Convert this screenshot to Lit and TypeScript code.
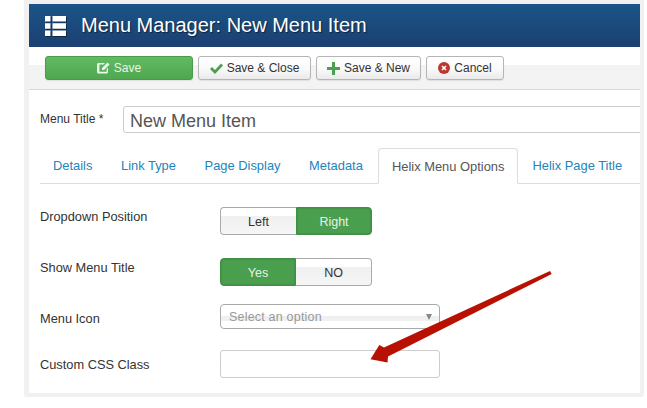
import { LitElement, html, css } from "lit";
import { customElement } from "lit/decorators.js";

@customElement("app-root")
export class AppRoot extends LitElement {
  static override styles = css`
    :host {
      display: block;
      width: 647px;
      height: 408px;
      overflow: hidden;
      background: #fff;
      position: relative;
      font-family: "Liberation Sans", Arial, sans-serif;
      color: #333;
    }

    .frame {
      margin-left: 24px;
      width: 611px;
      height: 389px;
      background: #fff;
      border: solid #f1f1f1;
      border-width: 4px 4px 4px 5px;
      border-radius: 0 0 3px 3px;
      overflow: hidden;
    }

    .header {
      height: 43px;
      display: flex;
      align-items: center;
      gap: 15px;
      padding-left: 16px;
      background: linear-gradient(#1a5589, #1c3f70);
      color: #fff;
      font-size: 20px;
      text-shadow: 1px 1px 1px rgba(0, 0, 0, 0.5);
    }

    .header svg { filter: drop-shadow(1px 1px 0 rgba(0, 0, 0, 0.45)); }

    .toolbar {
      height: 43px;
      box-sizing: border-box;
      padding: 9px 0 0 16px;
      display: flex;
      gap: 5px;
      align-items: flex-start;
      border-bottom: 1px solid #d8d8d8;
      background: linear-gradient(#fff 18px, #f3f3f3 18px);
    }

    .btn {
      height: 24px;
      box-sizing: border-box;
      display: flex;
      align-items: center;
      justify-content: center;
      gap: 4px;
      border: 1px solid #b5b5b5;
      border-radius: 3px;
      background: linear-gradient(#fff, #fafafa 50%, #eaeaea);
      font-size: 12px;
      color: #333;
      box-shadow: 0 1px 1px rgba(0, 0, 0, 0.08);
    }

    .btn.save {
      width: 148px;
      border-color: #4a9a4a;
      background: linear-gradient(#62bb62, #4fa84f);
      color: #e8f5e8;
    }
    .btn.close { width: 113px; }
    .btn.new { width: 105px; }
    .btn.cancel { width: 78px; }

    .title-row {
      display: flex;
      align-items: center;
      gap: 15px;
      padding: 16px 0 0 11px;
      font-size: 12px;
    }

    .title-row span { width: 68px; flex: none; margin-top: -2px; }

    .title-box {
      flex: 1;
      height: 27px;
      box-sizing: border-box;
      margin-right: -5px;
      padding: 1px 0 0 6px;
      border: 1px solid #ccc;
      border-radius: 3px 0 0 3px;
      font-size: 18px;
      line-height: 26px;
      color: #555;
    }

    .tabs {
      display: flex;
      margin: 15px 0 0 11px;
      height: 36px;
      box-sizing: border-box;
      border-bottom: 1px solid #ddd;
      font-size: 12.9px;
      color: #2384bb;
    }

    .tab {
      padding: 0 14.3px;
      line-height: 36px;
      white-space: nowrap;
    }

    .tab:first-child { margin-left: -1.3px; }

    .tab.active {
      height: 36px;
      box-sizing: border-box;
      margin-left: 1px;
      padding: 0 12.8px;
      border: 1px solid #ddd;
      border-bottom-color: #fff;
      border-radius: 4px 4px 0 0;
      line-height: 35px;
      color: #555;
    }

    .form {
      padding: 23px 0 0 11px;
      display: grid;
      grid-template-columns: 180px 1fr;
      grid-template-rows: 51px 46px 46px 28px;
      font-size: 12.8px;
    }

    .form label { padding-top: 2px; }
    .form label.low { padding-top: 7px; }

    .toggle {
      display: flex;
      width: 152px;
      height: 28px;
      font-size: 12.5px;
    }

    .toggle div {
      width: 76px;
      box-sizing: border-box;
      display: flex;
      align-items: center;
      justify-content: center;
      padding-top: 1px;
      border: 1px solid #aaa;
      background: linear-gradient(#fff, #fff 32%, #f0f0f0 32%, #f6f6f6);
    }

    .toggle div:first-child { border-radius: 4px 0 0 4px; border-right: 0; }
    .toggle div:last-child { border-radius: 0 4px 4px 0; border-left: 0; }

    .toggle div.on {
      border: 1px solid #3f8f44;
      background: #4a9f4e;
      color: #e6f3e6;
      box-shadow: inset 0 0 2px rgba(0, 0, 0, 0.25);
    }

    .select {
      width: 220px;
      height: 25px;
      box-sizing: border-box;
      display: flex;
      align-items: center;
      justify-content: space-between;
      padding: 1px 7px 0 8px;
      border: 1px solid #aaa;
      border-radius: 4px;
      background: linear-gradient(#fff 46%, #eee 46%, #f2f2f2 70%, #fff 70%);
      color: #999;
      font-size: 12.5px;
      letter-spacing: 0.2px;
    }

    .caret {
      width: 0;
      height: 0;
      border: 3.5px solid transparent;
      border-top: 6px solid #888;
      border-bottom: 0;
    }

    .text-input {
      width: 220px;
      height: 28px;
      box-sizing: border-box;
      border: 1px solid #ccc;
      border-radius: 3px;
    }

    .arrow {
      position: absolute;
      left: 0;
      top: 0;
      pointer-events: none;
    }
  `;

  override render() {
    return html`
      <div class="frame">
        <div class="header">
          <svg width="21" height="20" viewBox="0 0 21 20" fill="#fff">
            <path d="M0 0h5.500v5.500H0zM7.500 0H21v5.500H7.500zM0 7.200h5.500v5.600H0zM7.500 7.200H21v5.600H7.500zM0 14.500h5.500V20H0zM7.500 14.500H21V20H7.500z" />
          </svg>
          <span>Menu Manager: New Menu Item</span>
        </div>
        <div class="toolbar">
          <div class="btn save">
            <svg width="13" height="12" viewBox="0 0 13 12" fill="#eef7ee">
              <path d="M1.500 1H8L6.500 2.600H2.400v7.200h7.200V7L11 5.500v4.800c0 .7-.6 1.200-1.200 1.200H1.500C.7 11.500 0 10.900 0 10V2.500C0 1.600.7 1 1.500 1zM10.500.5L12.500 2.500 7 8H5V6z" />
            </svg>
            <span>Save</span>
          </div>
          <div class="btn close">
            <svg width="13" height="11" viewBox="0 0 13 11" fill="#4c9f52">
              <path d="M0 6l2-2 3 3 6-6.500 2 2L5 11z" />
            </svg>
            <span>Save &amp; Close</span>
          </div>
          <div class="btn new">
            <svg width="13" height="13" viewBox="0 0 13 13" fill="#4c9f52">
              <path d="M5 0h3v5h5v3H8v5H5V8H0V5h5z" />
            </svg>
            <span>Save &amp; New</span>
          </div>
          <div class="btn cancel">
            <svg width="12" height="12" viewBox="0 0 12 12">
              <circle cx="6" cy="6" r="6" fill="#bd362f" />
              <path d="M4 4l4 4M8 4l-4 4" stroke="#fff" stroke-width="1.600" />
            </svg>
            <span>Cancel</span>
          </div>
        </div>
        <div class="title-row">
          <span>Menu Title *</span>
          <div class="title-box">New Menu Item</div>
        </div>
        <div class="tabs">
          <div class="tab">Details</div>
          <div class="tab">Link Type</div>
          <div class="tab">Page Display</div>
          <div class="tab">Metadata</div>
          <div class="tab active">Helix Menu Options</div>
          <div class="tab">Helix Page Title</div>
        </div>
        <div class="form">
          <label>Dropdown Position</label>
          <div class="toggle"><div>Left</div><div class="on">Right</div></div>
          <label>Show Menu Title</label>
          <div class="toggle"><div class="on">Yes</div><div>NO</div></div>
          <label class="low">Menu Icon</label>
          <div class="select"><span>Select an option</span><i class="caret"></i></div>
          <label class="low">Custom CSS Class</label>
          <div class="text-input"></div>
        </div>
      </div>
      <svg class="arrow" width="647" height="408" viewBox="0 0 647 408">
        <path fill="#b81002" d="M370.500 359.300L379.300 345 384 347.500 550 271 551.700 274 388 356.500 387.500 362.500z" />
      </svg>
    `;
  }
}
